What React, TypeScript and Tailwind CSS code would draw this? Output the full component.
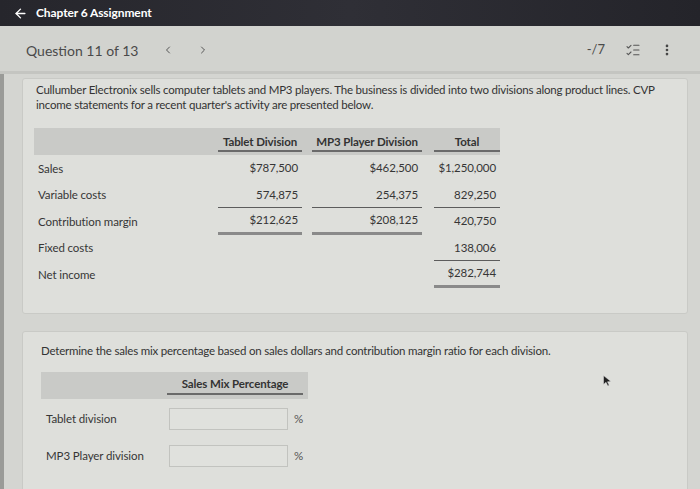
import { ArrowLeft, ChevronLeft, ChevronRight, ListChecks, MoreVertical } from "lucide-react";

interface Row {
  label: string;
  tablet: string;
  mp3: string;
  total: string;
  lineTablet?: "single" | "double";
  lineMp3?: "single" | "double";
  lineTotal?: "single" | "double";
}

const rows: Row[] = [
  { label: "Sales", tablet: "$787,500", mp3: "$462,500", total: "$1,250,000" },
  {
    label: "Variable costs",
    tablet: "574,875",
    mp3: "254,375",
    total: "829,250",
    lineTablet: "single",
    lineMp3: "single",
    lineTotal: "single",
  },
  {
    label: "Contribution margin",
    tablet: "$212,625",
    mp3: "$208,125",
    total: "420,750",
    lineTablet: "double",
    lineMp3: "double",
  },
  { label: "Fixed costs", tablet: "", mp3: "", total: "138,006", lineTotal: "single" },
  { label: "Net income", tablet: "", mp3: "", total: "$282,744", lineTotal: "double" },
];

function lineClass(kind?: "single" | "double") {
  if (kind === "single") return "border-b border-[#5c5c5c]";
  if (kind === "double") return "border-b-[3px] border-[#8a8a8a]";
  return "border-b border-transparent";
}

function ValueCell({ value, width, line }: { value: string; width: string; line?: "single" | "double" }) {
  return (
    <div className={`${width} h-full flex items-center justify-end pr-[4px] ${lineClass(line)}`}>
      {value}
    </div>
  );
}

export default function App() {
  return (
    <div
      className="relative w-[700px] h-[489px] overflow-hidden bg-[#d4d5d1] text-[#333]"
      style={{ fontFamily: "Lato, 'Open Sans', sans-serif" }}
    >
      {/* Top bar */}
      <div className="h-[26px] bg-gradient-to-r from-[#26262c] via-[#2f2f36] to-[#24242a] flex items-center pl-[13px]">
        <ArrowLeft className="w-[15px] h-[15px] text-white" strokeWidth={2.2} />
        <span className="ml-[8px] text-[12px] font-bold text-white tracking-[-0.1px]">Chapter 6 Assignment</span>
      </div>

      {/* Question header */}
      <div className="h-[48px] bg-[#d2d3cf] border-b-[3px] border-[#c4c5c1] flex items-center pl-[26px] pr-[26px] pt-[3px]">
        <span className="text-[14px] text-[#4a4a4a]">Question 11 of 13</span>
        <ChevronLeft className="ml-[24px] w-[12px] h-[12px] text-[#555]" strokeWidth={2} />
        <ChevronRight className="ml-[23px] w-[12px] h-[12px] text-[#555]" strokeWidth={2} />
        <div className="ml-auto flex items-center">
          <span className="text-[13px] text-[#4a4a4a]">-/7</span>
          <ListChecks className="ml-[20px] w-[16px] h-[16px] text-[#555]" strokeWidth={1.6} />
          <MoreVertical className="ml-[19px] w-[14px] h-[14px] text-[#444]" strokeWidth={2.6} />
        </div>
      </div>

      {/* Body */}
      <div className="flex">
        <div className="w-[4px] bg-[#9a9b98] self-stretch" />
        <div className="flex-1 pl-[18px] pr-[12px] pt-[4px]">
          {/* Card 1 */}
          <div className="h-[236px] bg-[#dedfdb] border border-[#c9cac6] rounded-[3px] pl-[13px] pt-[3px]">
            <p className="text-[11.5px] leading-[15px] text-[#333] tracking-[-0.2px] w-[622px]">
              Cullumber Electronix sells computer tablets and MP3 players. The business is divided into two divisions along
              product lines. CVP income statements for a recent quarter's activity are presented below.
            </p>

            <div className="mt-[16px] ml-[-2px] w-[466px] text-[11.5px] tracking-[-0.1px]">
              {/* Header */}
              <div className="h-[27px] bg-[#c9cac7] flex items-end pb-[3px] font-bold text-[#333]">
                <div className="w-[184px]" />
                <div className="w-[84px] text-center border-b-2 border-[#6a6a6a]">Tablet Division</div>
                <div className="w-[10px]" />
                <div className="w-[110px] text-center border-b-2 border-[#6a6a6a]">MP3 Player Division</div>
                <div className="w-[12px]" />
                <div className="w-[66px] text-center border-b-2 border-[#6a6a6a]">Total</div>
              </div>

              {rows.map((r) => (
                <div key={r.label} className="h-[26.5px] flex items-center text-[#363636]">
                  <div className="w-[184px] pl-[4px]">{r.label}</div>
                  <ValueCell value={r.tablet} width="w-[84px]" line={r.lineTablet} />
                  <div className="w-[10px]" />
                  <ValueCell value={r.mp3} width="w-[110px]" line={r.lineMp3} />
                  <div className="w-[12px]" />
                  <ValueCell value={r.total} width="w-[66px]" line={r.lineTotal} />
                </div>
              ))}
            </div>
          </div>

          {/* Card 2 */}
          <div className="mt-[17px] h-[180px] bg-[#dedfdb] border border-[#c9cac6] rounded-[3px] pl-[18px] pt-[10px]">
            <p className="text-[11.5px] leading-[17px] text-[#333] tracking-[-0.2px]">
              Determine the sales mix percentage based on sales dollars and contribution margin ratio for each division.
            </p>

            <div className="mt-[13px] w-[267px] text-[11.5px] tracking-[-0.1px]">
              <div className="h-[27px] bg-[#c9cac7] flex items-end pb-[4px] font-bold text-[#333]">
                <div className="w-[126px]" />
                <div className="w-[136px] text-center border-b-2 border-[#6a6a6a] pb-[1px]">Sales Mix Percentage</div>
              </div>

              <div className="h-[37px] mt-[1px] flex items-center">
                <div className="w-[128px] pl-[5px] text-[#363636]">Tablet division</div>
                <div className="w-[119px] h-[22px] border border-[#c2c3bf] bg-[#e0e1dd]" />
                <span className="ml-[6px] text-[#555]">%</span>
              </div>
              <div className="h-[37px] flex items-center">
                <div className="w-[128px] pl-[5px] text-[#363636]">MP3 Player division</div>
                <div className="w-[119px] h-[22px] border border-[#c2c3bf] bg-[#e0e1dd]" />
                <span className="ml-[6px] text-[#555]">%</span>
              </div>
            </div>
          </div>
        </div>
      </div>

      {/* Mouse cursor */}
      <svg className="absolute left-[603px] top-[375px]" width="9" height="12" viewBox="0 0 9 12">
        <path d="M0.5 0.5 L0.5 9.5 L3 7.3 L4.8 11 L6.2 10.3 L4.5 6.8 L8 6.6 Z" fill="#222" stroke="#e5e5e5" strokeWidth="0.5" />
      </svg>
    </div>
  );
}
